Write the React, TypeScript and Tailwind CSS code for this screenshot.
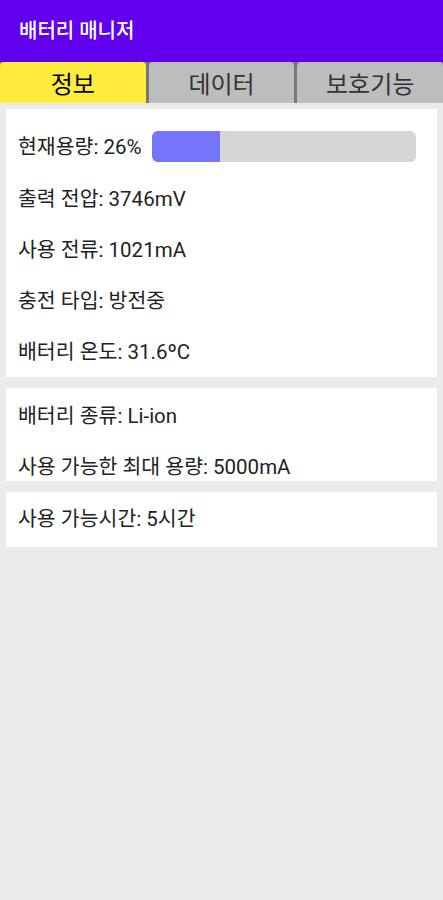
const rows = ['출력 전압: 3746mV', '사용 전류: 1021mA', '충전 타입: 방전중', '배터리 온도: 31.6ºC']

export default function App() {
  const level = 26

  return (
    <div
      className="flex min-h-[900px] w-[443px] flex-col bg-[#ebebeb] text-[20.5px] text-[#222]"
      style={{ fontFamily: 'Roboto, "Noto Sans CJK KR", sans-serif' }}
    >
      <div className="flex h-[62px] items-center bg-[#6200ee] pl-[19px] pb-[1px]">
        <h1 className="text-[20px] font-medium text-white">배터리 매니저</h1>
      </div>

      <div className="flex h-[41px] gap-[3px] bg-[#777]">
        <div className="flex flex-1 items-center justify-center rounded-t-[4px] bg-[#ffeb3b] pt-[4px] text-[24px] text-black">정보</div>
        <div className="flex flex-1 items-center justify-center rounded-t-[4px] bg-[#bdbdbd] pt-[4px] text-[24px] text-[#333]">데이터</div>
        <div className="flex flex-1 items-center justify-center rounded-t-[4px] bg-[#bdbdbd] pt-[4px] text-[24px] text-[#333]">보호기능</div>
      </div>

      <div className="flex flex-col gap-[11px] px-[6px] pt-[6px]">
        <div className="flex h-[268px] flex-col bg-white pl-[12px] pr-[21px] pt-[22px]">
          <div className="flex h-[31px] items-center gap-[10px]">
            <span className="pt-[2px]">현재용량: {level}%</span>
            <div className="h-[31px] flex-1 overflow-hidden rounded-[6px] bg-[#d6d6d6]">
              <div className="h-full bg-[#7474fc]" style={{ width: `${level}%` }} />
            </div>
          </div>
          {rows.map((r, i) => (
            <div key={r} className={`${i === 0 ? 'mt-[22px]' : 'mt-[20px]'} h-[31px] leading-[31px]`}>{r}</div>
          ))}
        </div>

        <div className="flex h-[93px] flex-col overflow-hidden bg-white pl-[12px] pt-[13px]">
          <div className="leading-[31px]">배터리 종류: Li-ion</div>
          <div className="mt-[20px] leading-[31px]">사용 가능한 최대 용량: 5000mA</div>
        </div>

        <div className="flex h-[55px] items-center bg-white pl-[12px]">
          <span>사용 가능시간: 5시간</span>
        </div>
      </div>
    </div>
  )
}
